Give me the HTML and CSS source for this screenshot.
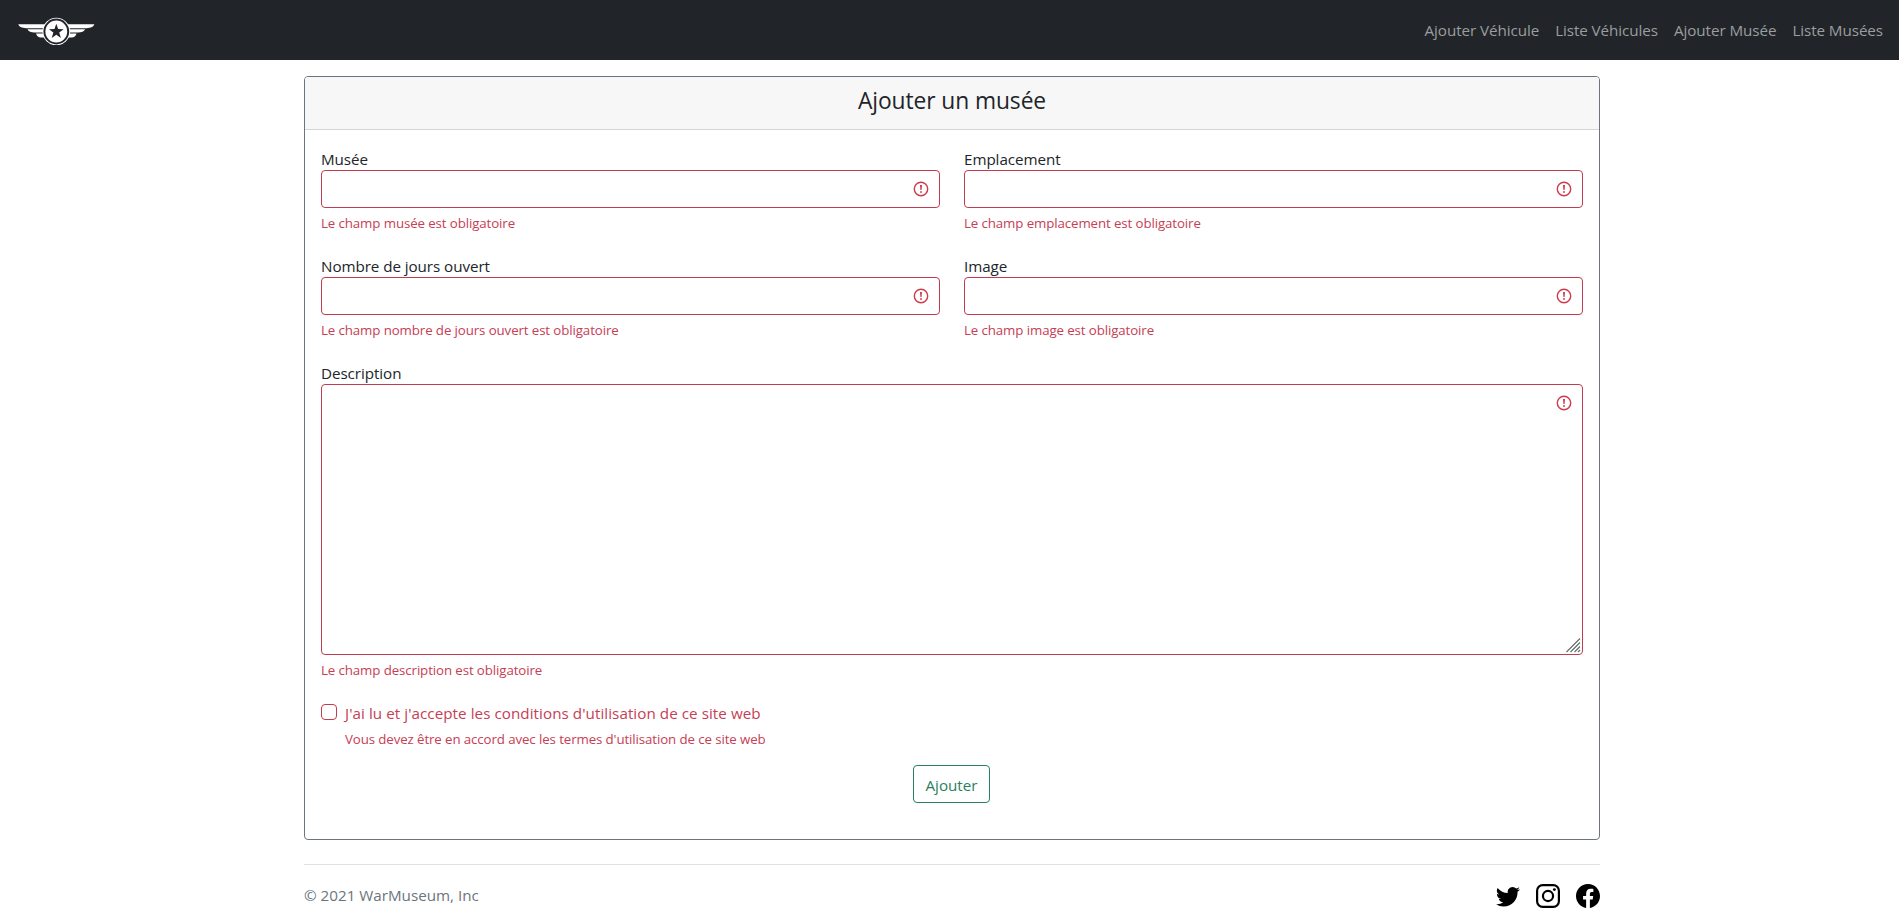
FILE: index.html
```html
<!DOCTYPE html>
<html lang="fr">
<head>
<meta charset="utf-8">
<title>WarMuseum</title>
<link rel="stylesheet" href="styles.css">
</head>
<body>
<svg class="sprite" aria-hidden="true">
  <symbol id="alert" viewBox="0 0 18 18"><circle cx="9" cy="9" r="6.7" fill="none" stroke="currentColor" stroke-width="1.4"/><path d="M8 5h2L9.6 10H8.400z" fill="currentColor"/><circle cx="9" cy="12" r=".95" fill="currentColor"/></symbol>
</svg>
<nav class="navbar">
  <a class="brand" href="#" aria-label="WarMuseum">
    <svg width="80" height="30" viewBox="0 0 80 30">
      <g id="wing" fill="#fff">
        <path d="M2.3 9.300H30L28 13.300H11.5C8 13.300 3 12.500 2.3 9.300z"/>
        <path d="M11.5 14.200H28V17.400H18.5C15 17.400 12.500 16.400 11.5 14.200z"/>
        <path d="M20 18.500H28L30 22.500H25C22.500 22.500 20.800 21 20 18.500z"/>
      </g>
      <use href="#wing" transform="matrix(-1 0 0 1 80.600 0)"/>
      <circle cx="40.300" cy="16.500" r="13.800" fill="#fff"/>
      <circle cx="40.300" cy="16.500" r="12.900" fill="#212529"/>
      <circle cx="40.300" cy="16.500" r="10.900" fill="#fff"/>
      <path d="M40.300 8.700l1.820 5.350 5.550.15-4.430 3.420 1.640 5.440-4.580-3.200-4.580 3.200 1.640-5.440-4.430-3.420 5.550-.15z" fill="#212529"/>
    </svg>
  </a>
  <div class="nav-links">
    <a href="#">Ajouter Véhicule</a><a href="#">Liste Véhicules</a><a href="#">Ajouter Musée</a><a href="#">Liste Musées</a>
  </div>
</nav>
<main class="container">
  <section class="card">
    <header class="card-header"><h1>Ajouter un musée</h1></header>
    <form class="card-body">
      <div class="fields">
        <div class="field"><label for="musee">Musée</label><div class="control"><input id="musee" type="text"><svg class="alert"><use href="#alert"/></svg></div><p class="feedback">Le champ musée est obligatoire</p></div>
        <div class="field"><label for="lieu">Emplacement</label><div class="control"><input id="lieu" type="text"><svg class="alert"><use href="#alert"/></svg></div><p class="feedback">Le champ emplacement est obligatoire</p></div>
        <div class="field"><label for="jours">Nombre de jours ouvert</label><div class="control"><input id="jours" type="text"><svg class="alert"><use href="#alert"/></svg></div><p class="feedback">Le champ nombre de jours ouvert est obligatoire</p></div>
        <div class="field"><label for="image">Image</label><div class="control"><input id="image" type="text"><svg class="alert"><use href="#alert"/></svg></div><p class="feedback">Le champ image est obligatoire</p></div>
        <div class="field wide"><label for="desc">Description</label><div class="control"><textarea id="desc"></textarea><svg class="alert"><use href="#alert"/></svg><svg class="grip" viewBox="0 0 15 15"><path d="M.5 14L14 .5M4.500 14L14 4.500M8.500 14L14 8.500M12 14L14 12"/></svg></div><p class="feedback">Le champ description est obligatoire</p></div>
      </div>
      <div class="check">
        <input id="terms" type="checkbox">
        <div><label for="terms">J'ai lu et j'accepte les conditions d'utilisation de ce site web</label><p class="feedback">Vous devez être en accord avec les termes d'utilisation de ce site web</p></div>
      </div>
      <button class="submit" type="button">Ajouter</button>
    </form>
  </section>
  <footer class="footer">
    <span>© 2021 WarMuseum, Inc</span>
    <div class="social">
      <svg viewBox="0 0 16 16"><path d="M5.026 15c6.038 0 9.341-5.003 9.341-9.334 0-.14 0-.282-.006-.422A6.685 6.685 0 0 0 16 3.542a6.658 6.658 0 0 1-1.889.518 3.301 3.301 0 0 0 1.447-1.817 6.533 6.533 0 0 1-2.087.793A3.286 3.286 0 0 0 7.875 6.030a9.325 9.325 0 0 1-6.767-3.429 3.289 3.289 0 0 0 1.018 4.382A3.323 3.323 0 0 1 .640 6.575v.045a3.288 3.288 0 0 0 2.632 3.218 3.203 3.203 0 0 1-.865.115 3.230 3.230 0 0 1-.614-.057 3.283 3.283 0 0 0 3.067 2.277A6.588 6.588 0 0 1 .780 13.580a6.320 6.320 0 0 1-.780-.045A9.344 9.344 0 0 0 5.026 15z"/></svg>
      <svg viewBox="0 0 24 24"><rect x="1.100" y="1.100" width="21.800" height="21.800" rx="5.600" fill="none" stroke="#000" stroke-width="2.200"/><circle cx="12" cy="12" r="5.080" fill="none" stroke="#000" stroke-width="2.200"/><circle cx="18.400" cy="5.600" r="1.440"/></svg>
      <svg viewBox="0 0 16 16"><path d="M16 8.049c0-4.446-3.582-8.050-8-8.050C3.580 0-.002 3.603-.002 8.050c0 4.017 2.926 7.347 6.750 7.951v-5.625h-2.030V8.050H6.750V6.275c0-2.017 1.195-3.131 3.022-3.131.876 0 1.791.157 1.791.157v1.980h-1.009c-.993 0-1.303.621-1.303 1.258v1.510h2.218l-.354 2.326H9.250V16c3.824-.604 6.750-3.934 6.750-7.951z"/></svg>
    </div>
  </footer>
</main>
</body>
</html>
```
FILE: styles.css
```css
*, *::before, *::after { box-sizing: border-box; }
body { margin: 0; background: #fff; color: #212529; font: 15.2px/24px "Open Sans", "Noto Sans", sans-serif; }
h1, p { margin: 0; font-weight: 400; }
.sprite { position: absolute; width: 0; height: 0; }
.navbar { display: flex; align-items: center; justify-content: space-between; height: 60px; padding: 0 16px; background: #212529; }
.brand, .brand svg { display: block; }
.nav-links { display: flex; gap: 16px; letter-spacing: -.065px; }
.nav-links a { color: #9b9d9f; text-decoration: none; }
.container { width: 1296px; margin: 16px 0 0 304px; }
.card { height: 764px; border: 1px solid #6c757d; border-radius: 4px; }
.card-header { height: 53px; padding: 8px 16px; background: #f7f7f7; border-bottom: 1px solid #d5d6d6; border-radius: 3px 3px 0 0; text-align: center; }
h1 { font-size: 22.8px; line-height: 31px; letter-spacing: -.08px; }
.card-body { padding: 16px; }
.fields { display: grid; grid-template-columns: 1fr 1fr; column-gap: 24px; row-gap: 20px; }
.field label, .check label { display: block; height: 24px; line-height: 26px; }
.field label { letter-spacing: -.06px; }
.check label { letter-spacing: .058px; }
.wide { grid-column: 1 / -1; }
.control { position: relative; }
.control input, .control textarea { display: block; width: 100%; height: 38px; padding: 6px 36px 6px 12px; border: 1px solid #c13c4e; border-radius: 4px; background: #fff; font: inherit; outline: 0; }
.control textarea { height: 271px; resize: none; }
.alert { position: absolute; top: 10px; right: 10px; width: 18px; height: 18px; color: #ce3b4c; }
.grip { position: absolute; right: 2px; bottom: 2px; width: 15px; height: 15px; fill: none; stroke: #66706a; stroke-width: 1.2; }
.feedback { height: 21px; margin-top: 4px; font-size: 13.3px; line-height: 23px; letter-spacing: -.11px; color: #c64054; }
.check { display: flex; gap: 8px; margin-top: 20px; color: #c64054; }
.check input { appearance: none; width: 16px; height: 16px; margin: 4px 0 0; border: 1px solid #c13c4e; border-radius: 4px; }
.submit { display: block; width: 77px; height: 38px; margin: 16px 0 0 592px; padding: 1px 0 0; border: 1px solid #2a8060; border-radius: 4px; background: #fff; color: #2a8060; font: inherit; }
.submit { margin-left: 592px; }
.footer { display: flex; align-items: center; justify-content: space-between; height: 63px; margin-top: 24px; border-top: 1px solid #dee0e2; color: #6c757d; }
.footer span { padding-bottom: 2px; }
.social { display: flex; gap: 16px; }
.social svg { display: block; width: 24px; height: 24px; fill: #000; }
```
